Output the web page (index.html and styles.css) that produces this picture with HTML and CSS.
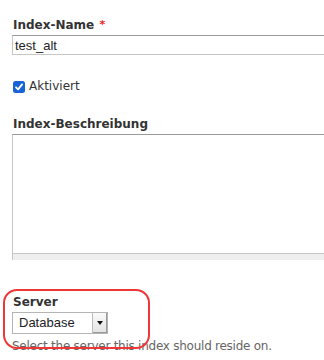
FILE: index.html
```html
<!DOCTYPE html>
<html lang="de">
<head>
  <meta charset="UTF-8" />
  <meta name="viewport" content="width=device-width, initial-scale=1" />
  <title>Index bearbeiten</title>
  <link rel="stylesheet" href="styles.css">
</head>
<body>

  <div class="page">

    <!-- Name -->
    <div class="form-item">
      <label class="form-label" for="name">Index-Name <span class="required">*</span></label>
      <input type="text" id="name" class="form-text" value="test_alt">
    </div>

    <!-- Aktiviert -->
    <div class="form-check">
      <span class="check-box">
        <svg width="12" height="12" viewBox="0 0 12 12">
          <rect x="0" y="0" width="12" height="12" rx="2.5" fill="#1864d6"/>
          <path d="M3 6.3 L5.1 8.4 L9.1 3.4" fill="none" stroke="#fff" stroke-width="1.8" stroke-linecap="round" stroke-linejoin="round"/>
        </svg>
      </span>
      <span class="check-label">Aktiviert</span>
    </div>

    <!-- Beschreibung -->
    <div class="form-item">
      <label class="form-label" for="desc">Index-Beschreibung</label>
      <div class="textarea-wrap">
        <textarea id="desc" class="form-textarea"></textarea>
        <div class="grippie"></div>
      </div>
    </div>

    <!-- Server -->
    <div class="form-item server-item">
      <label class="form-label">Server</label>
      <div class="select-box">
        <span class="select-value">Database</span>
        <span class="select-arrow"></span>
      </div>
      <div class="description">Select the server this index should reside on.</div>
      <div class="highlight"></div>
    </div>

  </div>

</body>
</html>
```

FILE: styles.css
```css
body {
  margin: 0;
  background: #fff;
  overflow: hidden;
  font-family: "DejaVu Sans", sans-serif;
  color: #333;
}

.page {
  width: 420px;
  padding: 17px 0 0 12px;
}

.form-label {
  display: block;
  font-weight: bold;
  font-size: 12px;
  line-height: 16px;
  color: #333;
  margin-bottom: 2px;
  padding-left: 1px;
}

.required {
  color: #e22;
  font-size: 11px;
  vertical-align: top;
  margin-left: 1px;
}

.form-text {
  display: block;
  box-sizing: border-box;
  width: 400px;
  height: 20px;
  margin: 0;
  padding: 0 2px;
  font-family: "Liberation Sans", Arial, sans-serif;
  font-size: 13px;
  color: #222;
  border: 1px solid #c6c6c6;
  border-top-color: #9a9a9a;
  outline: none;
}

.form-check {
  display: flex;
  align-items: flex-start;
  margin-top: 23px;
  line-height: 16px;
  font-size: 12px;
}

.check-box {
  display: block;
  width: 12px;
  height: 12px;
  margin: 3px 4px 0 1px;
}

.check-box svg {
  display: block;
}

.check-label {
  color: #333;
}

.form-check + .form-item {
  margin-top: 22px;
}

.textarea-wrap {
  width: 400px;
}

.form-textarea {
  display: block;
  box-sizing: border-box;
  width: 100%;
  height: 119px;
  margin: 0;
  resize: none;
  border: 1px solid #c6c6c6;
  border-top-color: #9a9a9a;
  border-bottom: none;
  outline: none;
}

.grippie {
  height: 6px;
  background: #eee;
  border: 1px solid #c6c6c6;
  border-bottom: none;
}

.server-item {
  position: relative;
  margin-top: 34px;
}

.select-box {
  display: flex;
  box-sizing: border-box;
  width: 96px;
  height: 22px;
  border: 1px solid #b5b5b5;
  background: #fff;
}

.select-value {
  flex: 1;
  padding-left: 6px;
  font-family: "Liberation Sans", Arial, sans-serif;
  font-size: 13px;
  line-height: 20px;
  color: #222;
}

.select-arrow {
  position: relative;
  width: 14px;
  border-left: 1px solid #bbb;
  background: linear-gradient(#fafafa, #e2e2e2);
  box-shadow: inset -1px -1px 0 #999;
}

.select-arrow::after {
  content: "";
  position: absolute;
  left: 4px;
  top: 8px;
  border-left: 3px solid transparent;
  border-right: 3px solid transparent;
  border-top: 4px solid #111;
}

.description {
  margin-top: 4px;
  font-size: 12px;
  line-height: 16px;
  letter-spacing: -0.25px;
  color: #666;
}

/* red annotation ring */
.highlight {
  position: absolute;
  left: -9px;
  top: -5px;
  width: 147px;
  height: 60px;
  border: 2px solid #f03535;
  border-radius: 14px;
  box-sizing: border-box;
}
```
